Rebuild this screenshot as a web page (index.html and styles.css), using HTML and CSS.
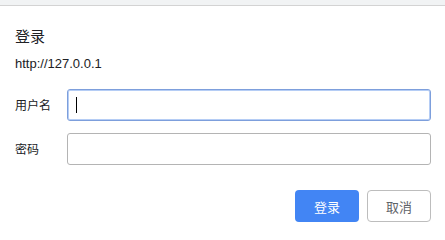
FILE: index.html
```html
<!DOCTYPE html>
<html lang="zh-CN">
<head>
<meta charset="utf-8">
<title>登录</title>
<link rel="stylesheet" href="styles.css">
</head>
<body>
<div class="topbar"></div>
<div class="dialog">
  <div class="title">登录</div>
  <div class="origin">http://127.0.0.1</div>
  <div class="form">
    <div class="row">
      <div class="label">用户名</div>
      <div class="field focused"><span class="caret"></span></div>
    </div>
    <div class="row">
      <div class="label">密码</div>
      <div class="field"></div>
    </div>
  </div>
  <div class="actions">
    <div class="btn primary">登录</div>
    <div class="btn secondary">取消</div>
  </div>
</div>
</body>
</html>
```
FILE: styles.css
```css
html, body {
  margin: 0;
  padding: 0;
  background: #ffffff;
}
body {
  width: 445px;
  height: 237px;
  overflow: hidden;
  font-family: "Noto Sans", "Noto Sans CJK SC", sans-serif;
  color: #202124;
}
.topbar {
  height: 5px;
  background: #f1f3f4;
  border-bottom: 1px solid #d3d3d3;
}
.dialog {
  display: flex;
  flex-direction: column;
  padding: 20px 14px 0 15px;
}
.title {
  font-family: "Noto Sans CJK SC", sans-serif;
  font-size: 15px;
  line-height: 20px;
  color: #202124;
}
.origin {
  margin-top: 9px;
  font-family: "Liberation Sans", sans-serif;
  font-size: 13px;
  line-height: 18px;
  color: #202124;
}
.form {
  margin-top: 16px;
  display: flex;
  flex-direction: column;
  gap: 12px;
}
.row {
  display: flex;
  align-items: center;
}
.label {
  width: 52px;
  font-family: "Noto Sans CJK SC", sans-serif;
  font-size: 12px;
  line-height: 16px;
  color: #202124;
}
.field {
  box-sizing: border-box;
  width: 364px;
  height: 32px;
  border: 1px solid #b4b4b4;
  border-radius: 3px;
  display: flex;
  align-items: center;
  padding-left: 8px;
}
.field.focused {
  border-color: #7d9fdc;
  box-shadow: inset 0 0 0 1px #b5cdf5;
}
.caret {
  width: 1px;
  height: 16px;
  background: #000000;
}
.actions {
  margin-top: 25px;
  display: flex;
  justify-content: flex-end;
  gap: 8px;
}
.btn {
  box-sizing: border-box;
  width: 64px;
  height: 32px;
  border-radius: 4px;
  display: flex;
  align-items: center;
  justify-content: center;
  font-family: "Noto Sans CJK SC", sans-serif;
  font-size: 13px;
}
.primary {
  background: #4285f4;
  color: #ffffff;
}
.secondary {
  background: #ffffff;
  border: 1px solid #bdbdbd;
  color: #5f6368;
}
```
